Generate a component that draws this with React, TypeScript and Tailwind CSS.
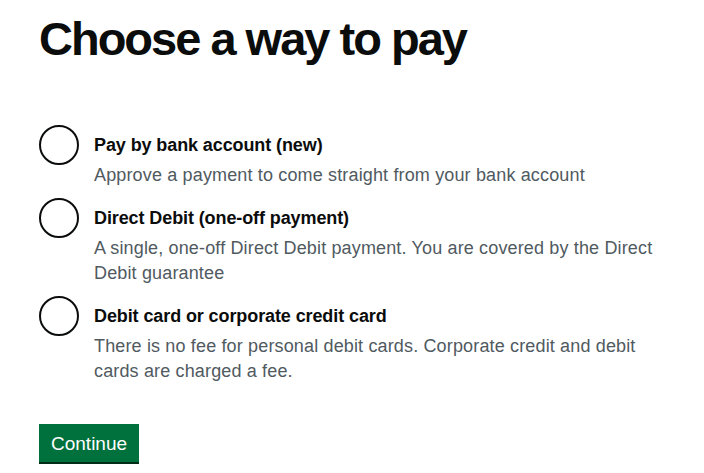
const options = [
  {
    label: "Pay by bank account (new)",
    hint: ["Approve a payment to come straight from your bank account"],
  },
  {
    label: "Direct Debit (one-off payment)",
    hint: [
      "A single, one-off Direct Debit payment. You are covered by the Direct",
      "Debit guarantee",
    ],
  },
  {
    label: "Debit card or corporate credit card",
    hint: [
      "There is no fee for personal debit cards. Corporate credit and debit",
      "cards are charged a fee.",
    ],
  },
];

function RadioItem({ label, hint }: { label: string; hint: string[] }) {
  return (
    <div className="flex">
      <div className="w-[40px] h-[40px] shrink-0 rounded-full border-2 border-[#0b0c0c] bg-white" />
      <div className="pl-[15px]">
        <div className="pt-[8px] pb-[5px] text-[18px] leading-[25px] font-bold tracking-[-0.1px] text-[#0b0c0c]">
          {label}
        </div>
        <div className="text-[18px] leading-[25px] tracking-[0.15px] text-[#505a5f]">
          {hint.map((line, i) => (
            <div key={i}>{line}</div>
          ))}
        </div>
      </div>
    </div>
  );
}

export default function App() {
  return (
    <div
      className="min-h-[473px] bg-white px-[39px] pt-[14px]"
      style={{ fontFamily: '"Liberation Sans", Arial, sans-serif' }}
    >
      <h1 className="text-[47px] leading-[50px] font-bold tracking-[-2px] text-[#0b0c0c]">
        Choose a way to pay
      </h1>

      <div className="mt-[61px] flex flex-col gap-[10px]">
        {options.map((o) => (
          <RadioItem key={o.label} label={o.label} hint={o.hint} />
        ))}
      </div>

      <button className="mt-[40px] h-[38px] px-[12px] bg-[#00703c] text-white text-[19px] leading-none shadow-[0_2px_0_#002d18]">
        Continue
      </button>
    </div>
  );
}
